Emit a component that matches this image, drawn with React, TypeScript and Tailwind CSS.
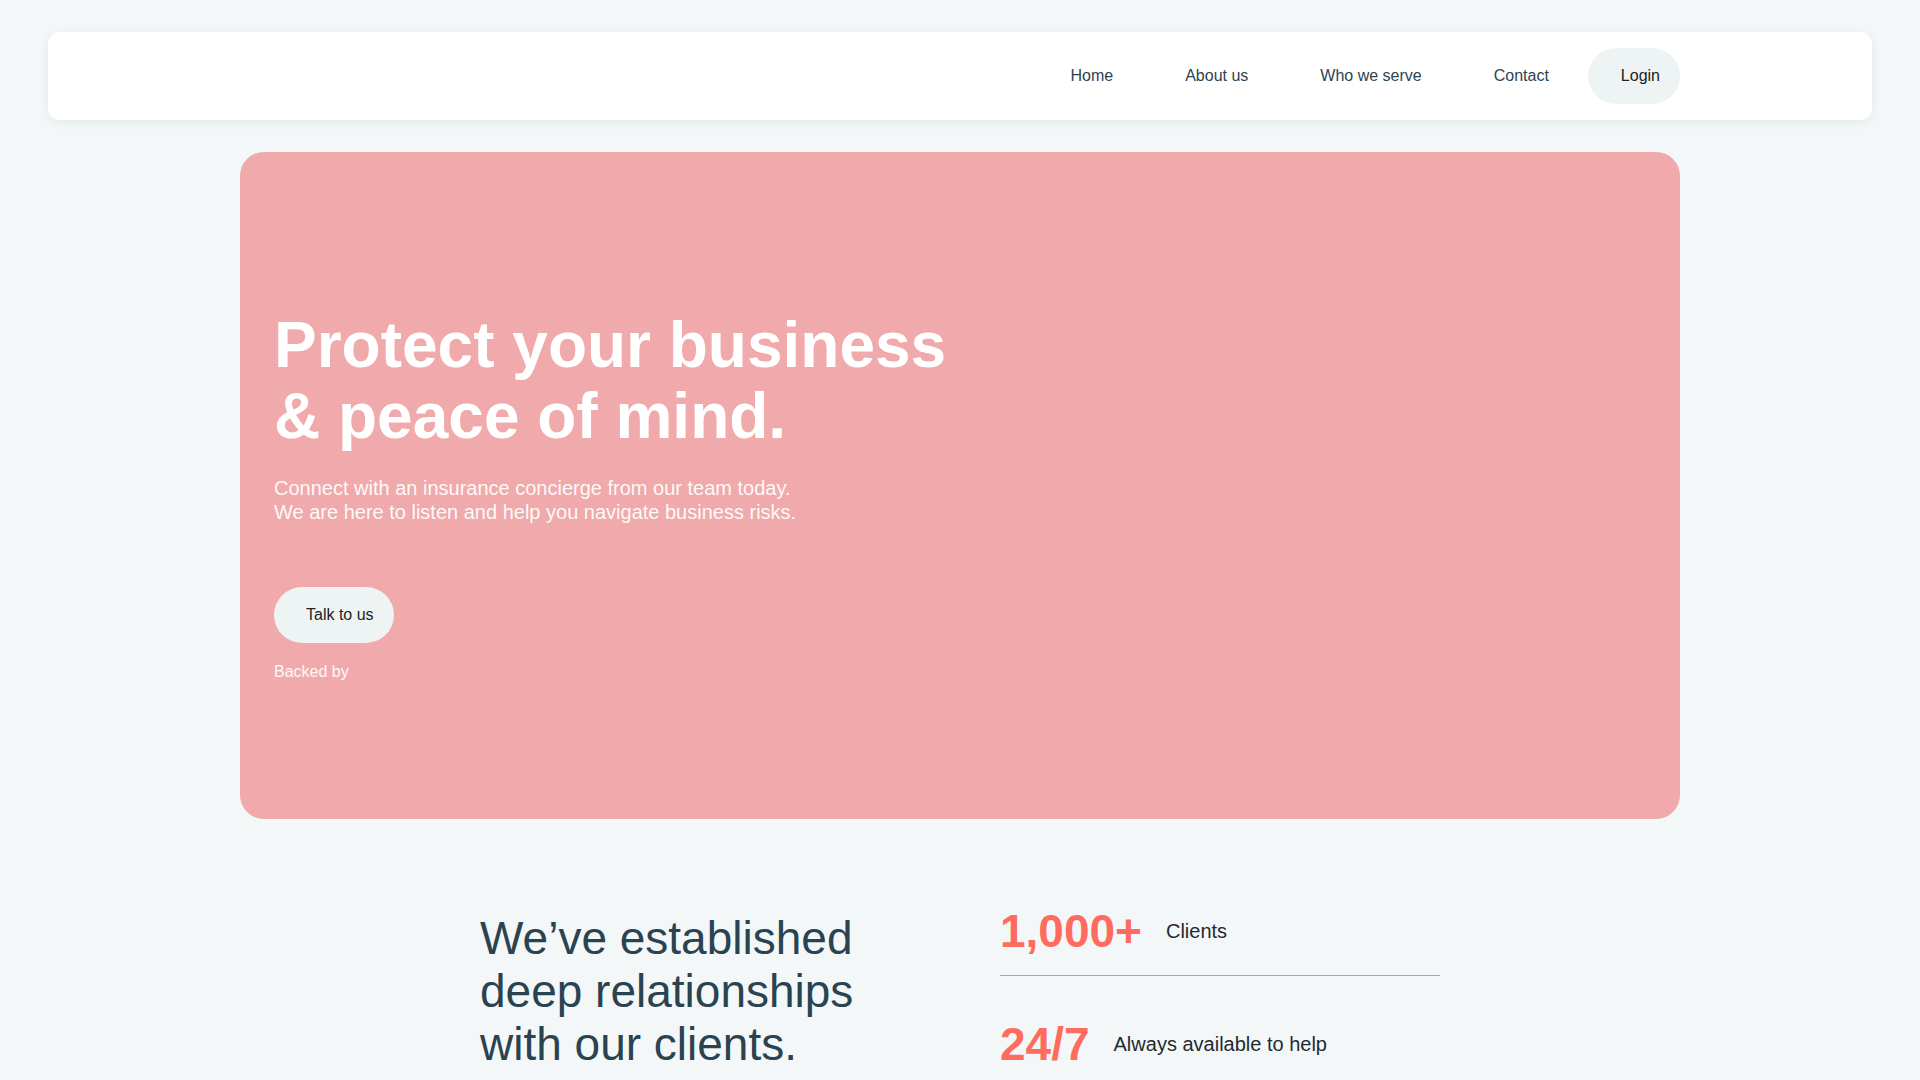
export default function App() {
  const links = ['Home', 'About us', 'Who we serve', 'Contact']
  return (
    <div className="min-h-screen bg-[#f3f7f8] font-['Liberation_Sans',Arial,sans-serif] pt-8 pb-10">
      <nav className="mx-12 h-[88px] rounded-xl bg-white shadow-[0_2px_10px_rgba(30,50,60,0.08)]">
        <div className="mx-auto flex h-full w-[1440px] items-center justify-end">
          <div className="flex items-center gap-[72px] text-[16px] text-[#2c4452]">
            {links.map((l) => (
              <a key={l} href="#" className="leading-6">
                {l}
              </a>
            ))}
          </div>
          <button className="ml-[39px] h-14 rounded-full bg-[#eef4f4] pl-[33px] pr-[20px] text-[16px] text-[#222]">
            Login
          </button>
        </div>
      </nav>

      <section className="mx-auto mt-8 h-[667px] w-[1440px] rounded-3xl bg-[#f0aaab] px-[34px] pt-[158px]">
        <h1 className="text-[64px] font-bold leading-[71px] text-white">
          Protect your business
          <br />
          &amp; peace of mind.
        </h1>
        <p className="mt-6 text-[20px] leading-6 text-white/95">
          Connect with an insurance concierge from our team today.
          <br />
          We are here to listen and help you navigate business risks.
        </p>
        <button className="mt-[63px] h-14 rounded-full bg-[#eef4f4] pl-8 pr-5 text-[16px] text-[#222]">
          Talk to us
        </button>
        <div className="mt-[17px] text-[16px] leading-6 text-white/90">Backed by</div>
      </section>

      <section className="mx-auto flex w-[960px] items-start pt-[89px]">
        <h2 className="mt-[4px] w-[520px] text-[46px] leading-[53px] text-[#2a4351]">
          We’ve established
          <br />
          deep relationships
          <br />
          with our clients.
        </h2>
        <div className="w-[440px]">
          <div className="flex items-center gap-6 border-b border-[#9ea8ae] pb-[21px]">
            <span className="text-[46px] font-bold leading-none text-[#ff6b5e]">1,000+</span>
            <span className="text-[20px] leading-7 text-[#1f2a30]">Clients</span>
          </div>
          <div className="flex items-center gap-6 pt-[45px]">
            <span className="text-[46px] font-bold leading-none text-[#ff6b5e]">24/7</span>
            <span className="text-[20px] leading-7 text-[#1f2a30]">Always available to help</span>
          </div>
        </div>
      </section>
    </div>
  )
}
